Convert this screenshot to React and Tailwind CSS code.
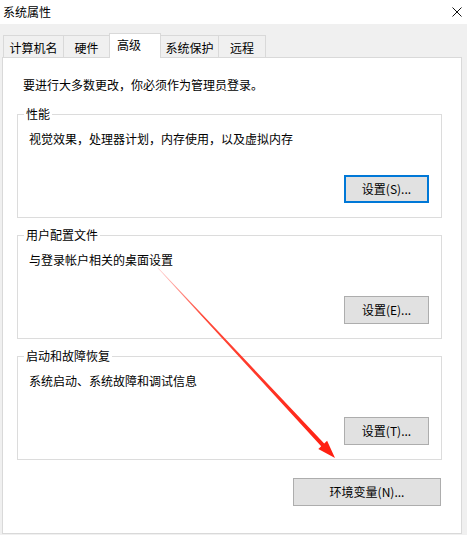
import React from "react";

const font = { fontFamily: '"Noto Sans CJK SC", "Noto Sans", sans-serif' };

const Tab = ({ label, width, selected }) => {
  if (selected) {
    return (
      <div
        className="relative z-10 -ml-px -mb-px h-[25px] border border-b-0 border-[#d9d9d9] bg-white pl-[7px] pt-[3px] text-[12px] leading-[16px] text-black"
        style={{ width }}
      >
        {label}
      </div>
    );
  }
  return (
    <div
      className="-ml-px first:ml-0 flex h-[22px] justify-center border border-b-0 border-[#d9d9d9] bg-[#f0f0f0] pt-[4px] text-[12px] leading-[16px] text-black"
      style={{ width }}
    >
      {label}
    </div>
  );
};

const Button = ({ label, focused, className = "w-[85px]" }) => (
  <button
    className={`flex h-[28px] items-center justify-center bg-[#e1e1e1] text-[12px] leading-[16px] text-black ${className} ${
      focused ? "border-2 border-[#0078d7]" : "border border-[#adadad]"
    }`}
  >
    {label}
  </button>
);

const Group = ({ title, desc, button, focused }) => (
  <fieldset className="h-[112px] border border-[#dcdcdc] pl-[6px] pr-[12px]">
    <legend className="px-[2px] text-[12px] leading-[16px] text-black">
      {title}
    </legend>
    <div className="pl-[5px] pt-[9px] text-[12px] leading-[16px] text-black">
      {desc}
    </div>
    <div className="mt-[28px] flex justify-end">
      <Button label={button} focused={focused} />
    </div>
  </fieldset>
);

export default function App() {
  return (
    <div
      className="relative h-[535px] w-[467px] overflow-hidden bg-[#f0f0f0]"
      style={font}
    >
      {/* Title bar */}
      <div className="flex h-[24px] items-center justify-between bg-white pl-[3px] pr-[5px]">
        <span className="text-[12px] leading-[16px] text-black">系统属性</span>
        <svg width="10" height="10" viewBox="0 0 10 10">
          <path d="M0.5 0.5 L9.5 9.5 M9.5 0.5 L0.5 9.5" stroke="#111" strokeWidth="1" />
        </svg>
      </div>

      {/* Tabs */}
      <div className="mt-[9px] flex items-end pl-[3px]">
        <Tab label="计算机名" width={61} />
        <Tab label="硬件" width={47} />
        <Tab label="高级" width={52} selected />
        <Tab label="系统保护" width={59} />
        <Tab label="远程" width={48} />
      </div>

      {/* Tab panel */}
      <div className="ml-[2px] h-[477px] w-[460px] border border-[#d9d9d9] bg-white pl-[14px] pt-[19px]">
        <div className="pl-[6px] text-[12px] leading-[16px] text-black">
          要进行大多数更改，你必须作为管理员登录。
        </div>
        <div className="mt-[13px] flex w-[425px] flex-col gap-[9px]">
          <Group
            title="性能"
            desc="视觉效果，处理器计划，内存使用，以及虚拟内存"
            button="设置(S)..."
            focused
          />
          <Group
            title="用户配置文件"
            desc="与登录帐户相关的桌面设置"
            button="设置(E)..."
          />
          <Group
            title="启动和故障恢复"
            desc="系统启动、系统故障和调试信息"
            button="设置(T)..."
          />
        </div>
        <div className="mt-[18px] flex w-[424px] justify-end">
          <Button label="环境变量(N)..." className="w-[148px]" />
        </div>
      </div>

      {/* Red annotation arrow */}
      <svg
        className="pointer-events-none absolute left-0 top-0"
        width="467"
        height="535"
        viewBox="0 0 467 535"
      >
        <defs>
          <linearGradient id="arr" x1="158" y1="268" x2="335" y2="458" gradientUnits="userSpaceOnUse">
            <stop offset="0" stopColor="#ffd0d0" />
            <stop offset="0.25" stopColor="#ff4a3a" />
            <stop offset="1" stopColor="#ff1e10" />
          </linearGradient>
        </defs>
        <polygon
          points="157.8,268.2 158.2,267.8 324.2,443.4 327.1,440.7 335,458 318.3,448.9 321.2,446.2"
          fill="url(#arr)"
        />
      </svg>
    </div>
  );
}
